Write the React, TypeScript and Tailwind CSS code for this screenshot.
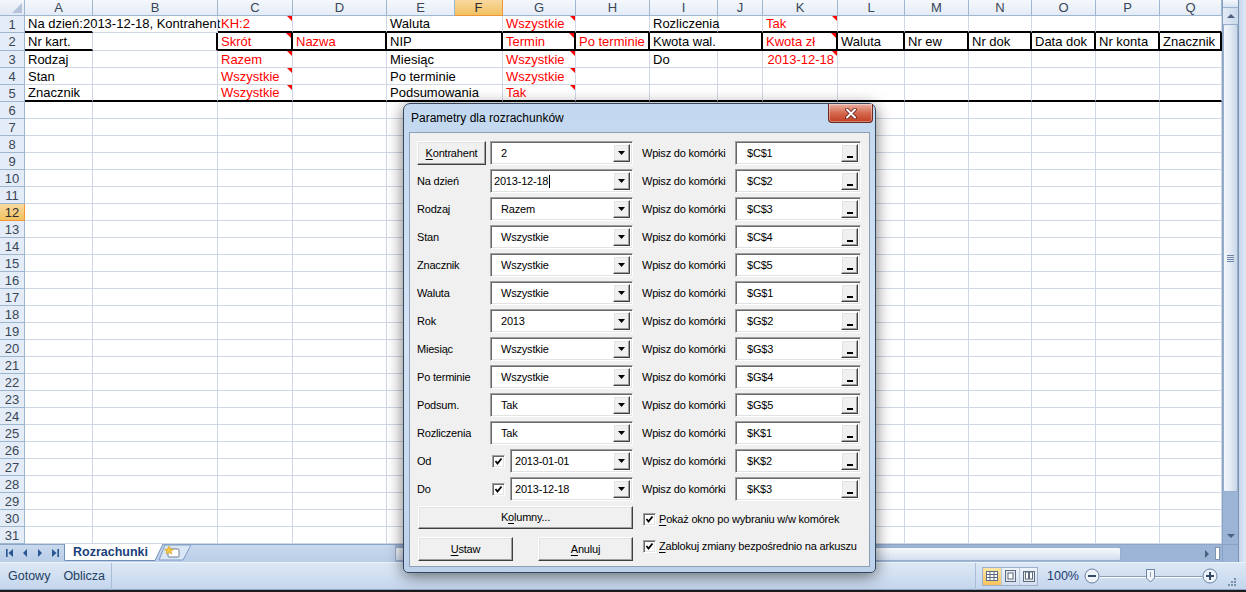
import clsx from 'clsx';

const LETTERS = ['A', 'B', 'C', 'D', 'E', 'F', 'G', 'H', 'I', 'J', 'K', 'L', 'M', 'N', 'O', 'P', 'Q'];
const GRID =
  'grid grid-cols-[25px_68px_125px_75px_94px_68px_48px_73px_74px_68px_45px_75px_67px_64px_63px_64px_64px_62px]';

type Cell = {
  t?: string;
  red?: boolean;
  right?: boolean;
  span?: boolean;
  tri?: boolean;
  tb?: boolean; // thick bottom
  tr?: boolean; // thick right
  nr?: boolean; // no right gridline (text overflow)
};

const thickRow = (n: number): Cell[] => Array.from({ length: n }, () => ({ tb: true }));
const boxRow = (labels: string[]): Cell[] => labels.map((t) => ({ t, tb: true, tr: true }));
const empty = (n: number): Cell[] => Array.from({ length: n }, () => ({}));

const TOP_ROWS: { n: number; h: string; cells: Cell[] }[] = [
  {
    n: 1,
    h: 'h-[17px]',
    cells: [
      { t: 'Na dzień:2013-12-18, Kontrahent', tb: true, nr: true },
      {},
      { t: 'KH:2', red: true, tri: true, tb: true },
      { tb: true },
      { t: 'Waluta', span: true, tb: true },
      { t: 'Wszystkie', red: true, tri: true, tb: true },
      { tb: true },
      { t: 'Rozliczenia', tb: true },
      { tb: true },
      { t: 'Tak', red: true, tri: true, tb: true },
      ...thickRow(6),
    ],
  },
  {
    n: 2,
    h: 'h-[18px]',
    cells: [
      { t: 'Nr kart.', tb: true },
      { tr: true },
      { t: 'Skrót', red: true, tri: true, tb: true, tr: true },
      { t: 'Nazwa', red: true, tb: true, tr: true },
      { t: 'NIP', span: true, tb: true, tr: true },
      { t: 'Termin', red: true, tri: true, tb: true, tr: true },
      { t: 'Po terminie', red: true, tb: true, tr: true },
      { t: 'Kwota wal.', span: true, tb: true, tr: true },
      { t: 'Kwota zł', red: true, tri: true, tb: true, tr: true },
      ...boxRow(['Waluta', 'Nr ew', 'Nr dok', 'Data dok', 'Nr konta', 'Znacznik']),
    ],
  },
  {
    n: 3,
    h: 'h-[17px]',
    cells: [
      { t: 'Rodzaj' },
      {},
      { t: 'Razem', red: true, tri: true },
      {},
      { t: 'Miesiąc', span: true },
      { t: 'Wszystkie', red: true, tri: true },
      {},
      { t: 'Do' },
      {},
      { t: '2013-12-18', red: true, tri: true, right: true },
      ...empty(6),
    ],
  },
  {
    n: 4,
    h: 'h-[17px]',
    cells: [
      { t: 'Stan' },
      {},
      { t: 'Wszystkie', red: true, tri: true },
      {},
      { t: 'Po terminie', span: true },
      { t: 'Wszystkie', red: true, tri: true },
      ...empty(10),
    ],
  },
  {
    n: 5,
    h: 'h-[17px]',
    cells: [
      { t: 'Znacznik', tb: true },
      { tb: true },
      { t: 'Wszystkie', red: true, tri: true, tb: true },
      { tb: true },
      { t: 'Podsumowania', span: true, tb: true },
      { t: 'Tak', red: true, tri: true, tb: true },
      ...thickRow(10),
    ],
  },
];

function SheetCell({ c }: { c: Cell }) {
  const b = c.tb ? 'border-b-2 border-b-black' : 'border-b border-b-[#d0d7e5]';
  const r = c.tr
    ? 'border-r-2 border-r-black'
    : c.nr
    ? 'border-r border-r-transparent'
    : 'border-r border-r-[#d0d7e5]';
  return (
    <div
      className={clsx(
        'relative flex items-center whitespace-nowrap px-[3px] text-[13px] leading-[15px]',
        b,
        r,
        c.span && 'col-span-2',
        c.red ? 'text-[#ff0000]' : 'text-black',
        c.right && 'justify-end'
      )}
    >
      {c.t}
      {c.tri && (
        <svg className="absolute right-0 top-0" width="5" height="5">
          <polygon points="0,0 5,0 5,5" fill="#ff0000" />
        </svg>
      )}
    </div>
  );
}

function RowHead({ n }: { n: number }) {
  return (
    <div
      className={clsx(
        'flex items-center justify-center border-b border-r text-[13px] leading-none',
        n === 12
          ? 'border-[#f29536] bg-linear-to-b from-[#f9d99f] to-[#f1c15f] text-[#2d2d2d]'
          : 'border-[#9eb6ce] bg-[#e4ecf7] text-[#3a4656]'
      )}
    >
      {n}
    </div>
  );
}

function Sheet() {
  const rest = Array.from({ length: 26 }, (_, i) => i + 6);
  return (
    <div className="w-[1222px] bg-white">
      <div className={GRID + ' h-[16px]'}>
        <div className="relative border-b border-r border-[#9eb6ce] bg-linear-to-b from-[#f3f6fb] to-[#e0e8f3]">
          <svg className="absolute bottom-[2px] right-[2px]" width="10" height="10">
            <polygon points="10,0 10,10 0,10" fill="#b5c4d8" />
          </svg>
        </div>
        {LETTERS.map((l) => (
          <div
            key={l}
            className={clsx(
              'flex items-center justify-center border-b border-r text-[13px] leading-none',
              l === 'F'
                ? 'border-[#f29536] bg-linear-to-b from-[#f9d99f] to-[#f1c15f] text-[#2d2d2d]'
                : 'border-[#9eb6ce] bg-linear-to-b from-[#f5f8fc] to-[#e4ecf7] text-[#3a4656]'
            )}
          >
            {l}
          </div>
        ))}
      </div>
      {TOP_ROWS.map((row) => (
        <div key={row.n} className={clsx(GRID, row.h)}>
          <RowHead n={row.n} />
          {row.cells.map((c, i) => (
            <SheetCell key={i} c={c} />
          ))}
        </div>
      ))}
      {rest.map((n) => (
        <div key={n} className={GRID + ' h-[17px]'}>
          <RowHead n={n} />
          {LETTERS.map((l) => (
            <SheetCell key={l} c={{}} />
          ))}
        </div>
      ))}
    </div>
  );
}

function Arrow({ dir, color = '#4c607e' }: { dir: 'up' | 'down' | 'left' | 'right'; color?: string }) {
  const pts = {
    up: '0,5 4,1 8,5',
    down: '0,1 8,1 4,5',
    left: '5,0 5,8 1,4',
    right: '1,0 1,8 5,4',
  }[dir];
  const vertical = dir === 'up' || dir === 'down';
  return (
    <svg width={vertical ? 8 : 6} height={vertical ? 6 : 8}>
      <polygon points={pts} fill={color} />
    </svg>
  );
}

function VScroll() {
  return (
    <div className="flex w-[16px] flex-col border-l border-[#8aa2c4] bg-[#9cb4d6]">
      <div className="h-[8px] border-b border-[#9cb2cd] bg-linear-to-b from-[#f3f7fc] to-[#d6e2f1]" />
      <div className="flex h-[16px] items-center justify-center bg-linear-to-r from-[#e4ecf6] to-[#c9d8eb]">
        <Arrow dir="up" />
      </div>
      <div className="flex h-[468px] items-center justify-center rounded-[2px] border border-[#98afcc] bg-linear-to-r from-[#f4f7fb] via-[#e2eaf4] to-[#c9d7e9]">
        <div className="flex flex-col gap-[1px]">
          <div className="h-px w-[7px] bg-[#6f85a5]" />
          <div className="h-px w-[7px] bg-[#6f85a5]" />
          <div className="h-px w-[7px] bg-[#6f85a5]" />
          <div className="h-px w-[7px] bg-[#6f85a5]" />
        </div>
      </div>
      <div className="flex-1" />
      <div className="flex h-[16px] items-center justify-center">
        <Arrow dir="down" />
      </div>
    </div>
  );
}

function RightFrame() {
  return <div className="w-[8px] border-l border-[#7d93b2] bg-linear-to-r from-[#c5d6eb] to-[#dfe8f4]" />;
}

function SheetTabs() {
  return (
    <div className="flex h-[18px]">
      <div className="flex w-[395px] items-start border-t border-[#8da6c8] bg-linear-to-b from-[#c9d9ee] to-[#b9cde8]">
        <div className="flex h-[16px] w-[64px] items-center gap-[9px] pl-[6px]">
          <svg width="7" height="8">
            <rect x="0" y="0" width="1.6" height="8" fill="#2a5594" />
            <polygon points="7,0 7,8 2.5,4" fill="#2a5594" />
          </svg>
          <Arrow dir="left" color="#2a5594" />
          <Arrow dir="right" color="#2a5594" />
          <svg width="7" height="8">
            <polygon points="0,0 0,8 4.5,4" fill="#2a5594" />
            <rect x="5.4" y="0" width="1.6" height="8" fill="#2a5594" />
          </svg>
        </div>
        <div className="-mt-px flex h-[17px]">
          <div className="flex items-center rounded-bl-[2px] border-b border-l border-[#6f8fb9] bg-white pl-[8px] pr-[3px] text-[12.5px] font-bold text-[#1b3f7a]">
            Rozrachunki
          </div>
          <svg width="12" height="17">
            <polygon points="0,0 12,0 4,17 0,17" fill="#ffffff" />
            <line x1="12" y1="0" x2="4" y2="16.5" stroke="#6f8fb9" />
            <line x1="0" y1="16.5" x2="4" y2="16.5" stroke="#6f8fb9" />
          </svg>
          <svg className="-ml-[6px]" width="34" height="17">
            <polygon points="8,1 34,1 26,16 2,16" fill="#dbe6f4" stroke="#7f9cc4" />
            <rect x="11" y="5" width="11" height="8" rx="1" fill="#ffffff" stroke="#6f7f96" />
            <polygon points="12,2 13.5,5 16.5,5.5 14,7.3 14.8,10 12,8.6 9.2,10 10,7.3 7.5,5.5 10.5,5" fill="#f5c542" stroke="#d19a1a" strokeWidth="0.6" />
          </svg>
        </div>
      </div>
      <div className="flex w-[827px] items-center border-t border-[#8da6c8] bg-[#9cb4d6]">
        <div className="h-[14px] w-[726px] rounded-[2px] border border-[#98afcc] bg-linear-to-b from-[#f6f9fc] via-[#e6edf6] to-[#d2def0]" />
        <div className="flex-1" />
        <div className="flex w-[12px] items-center justify-center">
          <Arrow dir="right" />
        </div>
        <div className="mx-[2px] h-[13px] w-[5px] border border-[#7f93ad] bg-white" />
      </div>
      <div className="w-[16px] border-l border-t border-[#8aa2c4] bg-[#9cb4d6]" />
      <RightFrame />
    </div>
  );
}

function StatusBar() {
  return (
    <div className="flex h-[27px] items-center border-t border-[#eef4fb] bg-linear-to-b from-[#dde8f5] to-[#c4d6ed] text-[12.5px] text-[#233e63]">
      <span className="ml-[8px]">Gotowy</span>
      <span className="ml-[13px]">Oblicza</span>
      <div className="ml-[6px] h-[27px] w-px bg-[#a9bdd8]" />
      <div className="ml-auto h-[27px] w-px bg-[#a9bdd8]" />
      <div className="ml-[6px] flex h-[19px] border border-[#9db1cc]">
        <div className="flex w-[18px] items-center justify-center bg-linear-to-b from-[#fde6a6] to-[#f7c25a]">
          <svg width="12" height="10">
            <rect x="0.5" y="0.5" width="11" height="9" fill="#ffffff" stroke="#5a6b82" />
            <line x1="4" y1="0.5" x2="4" y2="9.5" stroke="#5a6b82" />
            <line x1="8" y1="0.5" x2="8" y2="9.5" stroke="#5a6b82" />
            <line x1="0.5" y1="3.5" x2="11.5" y2="3.5" stroke="#5a6b82" />
            <line x1="0.5" y1="6.5" x2="11.5" y2="6.5" stroke="#5a6b82" />
          </svg>
        </div>
        <div className="flex w-[18px] items-center justify-center border-l border-[#b9c9de] bg-linear-to-b from-[#eef3f9] to-[#d2dfef]">
          <svg width="11" height="12">
            <rect x="0.5" y="0.5" width="10" height="11" fill="#e9e9e9" stroke="#5a6b82" />
            <rect x="3" y="3" width="5" height="6" fill="#ffffff" stroke="#5a6b82" />
          </svg>
        </div>
        <div className="flex w-[18px] items-center justify-center border-l border-[#b9c9de] bg-linear-to-b from-[#eef3f9] to-[#d2dfef]">
          <svg width="12" height="11">
            <rect x="0.5" y="0.5" width="11" height="10" fill="#e9e9e9" stroke="#5a6b82" />
            <rect x="2.5" y="1" width="3" height="7" fill="#ffffff" stroke="#5a6b82" />
            <rect x="6.5" y="1" width="3" height="7" fill="#ffffff" stroke="#5a6b82" />
          </svg>
        </div>
      </div>
      <span className="ml-[9px] w-[31px] text-[12.5px] text-[#1b3a70]">100%</span>
      <svg className="ml-[6px]" width="16" height="16">
        <circle cx="8" cy="8" r="7" fill="#eef3f9" stroke="#6b82a3" />
        <rect x="4" y="7" width="8" height="2" fill="#354a68" />
      </svg>
      <div className="relative flex h-[16px] w-[102px] items-center">
        <div className="h-px w-full bg-[#8a9cb6] shadow-[0_1px_0_#ffffff]" />
        <svg className="absolute left-[46px] top-[1px]" width="9" height="14">
          <polygon points="0.5,0.5 8.5,0.5 8.5,9 4.5,13 0.5,9" fill="#f2f6fb" stroke="#6b82a3" />
          <line x1="4.5" y1="3" x2="4.5" y2="8" stroke="#8aa0be" />
        </svg>
      </div>
      <svg width="16" height="16">
        <circle cx="8" cy="8" r="7" fill="#eef3f9" stroke="#6b82a3" />
        <rect x="4" y="7" width="8" height="2" fill="#354a68" />
        <rect x="7" y="4" width="2" height="8" fill="#354a68" />
      </svg>
      <svg className="ml-[10px] mr-[10px] self-end mb-[3px]" width="8" height="8">
        <rect x="6" y="0" width="2" height="2" fill="#7d90ab" />
        <rect x="3" y="3" width="2" height="2" fill="#7d90ab" />
        <rect x="6" y="3" width="2" height="2" fill="#7d90ab" />
        <rect x="0" y="6" width="2" height="2" fill="#7d90ab" />
        <rect x="3" y="6" width="2" height="2" fill="#7d90ab" />
        <rect x="6" y="6" width="2" height="2" fill="#7d90ab" />
      </svg>
    </div>
  );
}

/* ---------- dialog ---------- */

const RAISED =
  'border border-t-[#ffffff] border-l-[#ffffff] border-r-[#404040] border-b-[#404040] bg-[#f0f0f0] shadow-[inset_-1px_-1px_0_#a0a0a0,inset_1px_1px_0_#e3e3e3]';
const SUNKEN =
  'border border-t-[#a0a0a0] border-l-[#a0a0a0] border-r-[#ffffff] border-b-[#ffffff] bg-white shadow-[inset_1px_1px_0_#696969,inset_-1px_-1px_0_#e3e3e3]';

function DropButton({ glyph }: { glyph: 'arrow' | 'dash' }) {
  return (
    <div className={clsx('my-[2px] mr-[2px] flex w-[17px] items-center justify-center', RAISED)}>
      {glyph === 'arrow' ? (
        <svg width="7" height="4">
          <polygon points="0,0 7,0 3.5,4" fill="#000000" />
        </svg>
      ) : (
        <div className="mt-[8px] h-[2px] w-[6px] bg-black" />
      )}
    </div>
  );
}

function Combo({ value, w, indent, caret }: { value: string; w: string; indent: string; caret?: boolean }) {
  return (
    <div className={clsx('flex h-[24px]', w, SUNKEN)}>
      <div className={clsx('flex flex-1 items-center', indent)}>
        {value}
        {caret && <span className="ml-px h-[13px] w-px bg-black" />}
      </div>
      <DropButton glyph="arrow" />
    </div>
  );
}

function RefBox({ value }: { value: string }) {
  return (
    <div className={clsx('flex h-[24px] w-[126px]', SUNKEN)}>
      <div className="flex flex-1 items-center pl-[11px]">{value}</div>
      <DropButton glyph="dash" />
    </div>
  );
}

function Check() {
  return (
    <div className={clsx('flex h-[13px] w-[13px] items-center justify-center', SUNKEN)}>
      <svg width="9" height="9">
        <polyline points="1.5,4 3.5,6.5 7.5,1.5" fill="none" stroke="#000000" strokeWidth="1.8" />
      </svg>
    </div>
  );
}

function Btn({ w, h, children }: { w: string; h: string; children: React.ReactNode }) {
  return <div className={clsx('flex items-center justify-center', w, h, RAISED)}>{children}</div>;
}

const U = ({ c }: { c: string }) => <span className="underline underline-offset-[2px]">{c}</span>;

const PARAMS: { label: string; value: string; cell: string; caret?: boolean; check?: boolean }[] = [
  { label: 'Na dzień', value: '2013-12-18', cell: '$C$2', caret: true },
  { label: 'Rodzaj', value: 'Razem', cell: '$C$3' },
  { label: 'Stan', value: 'Wszystkie', cell: '$C$4' },
  { label: 'Znacznik', value: 'Wszystkie', cell: '$C$5' },
  { label: 'Waluta', value: 'Wszystkie', cell: '$G$1' },
  { label: 'Rok', value: '2013', cell: '$G$2' },
  { label: 'Miesiąc', value: 'Wszystkie', cell: '$G$3' },
  { label: 'Po terminie', value: 'Wszystkie', cell: '$G$4' },
  { label: 'Podsum.', value: 'Tak', cell: '$G$5' },
  { label: 'Rozliczenia', value: 'Tak', cell: '$K$1' },
  { label: 'Od', value: '2013-01-01', cell: '$K$2', check: true },
  { label: 'Do', value: '2013-12-18', cell: '$K$3', check: true },
];

function Dialog() {
  return (
    <div className="absolute left-[403px] top-[103px] flex h-[470px] w-[473px] flex-col rounded-t-[7px] rounded-b-[5px] border border-[#34475e] bg-linear-to-b from-[#c2d8f0] via-[#d5e4f5] to-[#bcd2eb] shadow-[0_3px_16px_rgba(0,0,0,0.55)]">
      <div className="flex h-[28px] justify-between">
        <span className="self-center pl-[7px] text-[12px] text-black">Parametry dla rozrachunków</span>
        <div className="mr-[2px] flex h-[19px] w-[45px] items-center justify-center rounded-b-[4px] border border-t-0 border-[#6b2a20] bg-linear-to-b from-[#eab0a2] via-[#d5694f] to-[#c03c22] shadow-[inset_0_0_0_1px_rgba(255,255,255,0.35)]">
          <svg width="12" height="11">
            <path d="M2 1.5 L10 9.5 M10 1.5 L2 9.5" stroke="#5b1a10" strokeWidth="3.6" strokeLinecap="round" />
            <path d="M2 1.5 L10 9.5 M10 1.5 L2 9.5" stroke="#ffffff" strokeWidth="2" strokeLinecap="round" />
          </svg>
        </div>
      </div>
      <div className="mx-[5px] h-[435px] border border-[#8e9fb5] bg-[#f0f0f0] pl-[7px] pt-[8px] text-[11px] tracking-[-0.2px] text-black">
        <div className="flex flex-col gap-[4px]">
          <div className="flex h-[24px] items-center">
            <Btn w="w-[69px]" h="h-[24px]">
              <span>
                <U c="K" />
                ontrahent
              </span>
            </Btn>
            <div className="w-[4px]" />
            <Combo value="2" w="w-[143px]" indent="pl-[10px]" />
            <span className="ml-[9px] w-[93px]">Wpisz do komórki</span>
            <RefBox value="$C$1" />
          </div>
          {PARAMS.map((p) => (
            <div key={p.label} className="flex h-[24px] items-center">
              {p.check ? (
                <>
                  <span className="w-[75px]">{p.label}</span>
                  <Check />
                  <div className="w-[5px]" />
                  <Combo value={p.value} w="w-[123px]" indent="pl-[4px]" />
                </>
              ) : (
                <>
                  <span className="w-[73px]">{p.label}</span>
                  <Combo value={p.value} w="w-[143px]" indent={p.caret ? 'pl-[3px]' : 'pl-[10px]'} caret={p.caret} />
                </>
              )}
              <span className="ml-[9px] w-[93px]">Wpisz do komórki</span>
              <RefBox value={p.cell} />
            </div>
          ))}
        </div>
        <div className="mt-[5px] flex">
          <div className="ml-px flex w-[215px] flex-col">
            <Btn w="w-[215px]" h="h-[23px]">
              <span>
                K<U c="o" />
                lumny...
              </span>
            </Btn>
            <div className="mt-[8px] flex justify-between">
              <Btn w="w-[95px]" h="h-[24px]">
                <span>
                  <U c="U" />
                  staw
                </span>
              </Btn>
              <Btn w="w-[95px]" h="h-[24px]">
                <span>
                  <U c="A" />
                  nuluj
                </span>
              </Btn>
            </div>
          </div>
          <div className="ml-[10px] flex flex-col pt-[7px]">
            <div className="flex h-[13px] items-center gap-[3px]">
              <Check />
              <span>
                <U c="P" />
                okaż okno po wybraniu w/w komórek
              </span>
            </div>
            <div className="mt-[14px] flex h-[13px] items-center gap-[3px]">
              <Check />
              <span>
                <U c="Z" />
                ablokuj zmiany bezpośrednio na arkuszu
              </span>
            </div>
          </div>
        </div>
      </div>
    </div>
  );
}

export default function App() {
  return (
    <div className="relative h-[592px] w-[1246px] overflow-hidden bg-white font-['Liberation_Sans',Arial,sans-serif]">
      <div className="flex h-[544px]">
        <Sheet />
        <VScroll />
        <RightFrame />
      </div>
      <SheetTabs />
      <StatusBar />
      <div className="h-[3px] border-t border-[#8fa5c3] bg-[#1c1c1c]" />
      <Dialog />
    </div>
  );
}
